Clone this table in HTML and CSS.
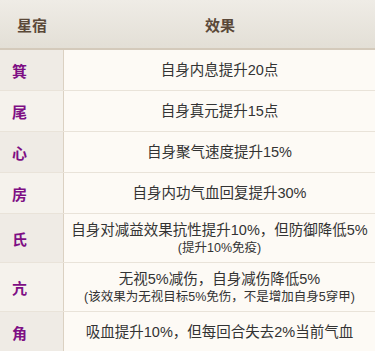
FILE: index.html
```html
<!DOCTYPE html>
<html lang="zh">
<head>
<meta charset="utf-8">
<link rel="stylesheet" href="styles.css">
</head>
<body>
<div class="table">
  <div class="head">
    <div class="hcell name">星宿</div>
    <div class="hcell effect">效果</div>
  </div>
  <div class="row odd">
    <div class="cell name">箕</div>
    <div class="cell effect"><div class="main">自身内息提升20点</div></div>
  </div>
  <div class="row">
    <div class="cell name">尾</div>
    <div class="cell effect"><div class="main">自身真元提升15点</div></div>
  </div>
  <div class="row odd">
    <div class="cell name">心</div>
    <div class="cell effect"><div class="main">自身聚气速度提升15%</div></div>
  </div>
  <div class="row">
    <div class="cell name">房</div>
    <div class="cell effect"><div class="main">自身内功气血回复提升30%</div></div>
  </div>
  <div class="row odd">
    <div class="cell name">氏</div>
    <div class="cell effect"><div class="main">自身对减益效果抗性提升10%，但防御降低5%</div><div class="sub">(提升10%免疫)</div></div>
  </div>
  <div class="row">
    <div class="cell name">亢</div>
    <div class="cell effect"><div class="main">无视5%减伤，自身减伤降低5%</div><div class="sub">(该效果为无视目标5%免伤，不是增加自身5穿甲)</div></div>
  </div>
  <div class="row odd">
    <div class="cell name">角</div>
    <div class="cell effect"><div class="main">吸血提升10%，但每回合失去2%当前气血</div></div>
  </div>
</div>
</body>
</html>
```

FILE: styles.css
```css
html, body {
  margin: 0;
  padding: 0;
  background: #fdfaf5;
}
body {
  font-family: "Liberation Sans", "Noto Sans CJK SC", sans-serif;
  color: #333;
  overflow: hidden;
}
.table {
  width: 375px;
}
.head {
  display: grid;
  grid-template-columns: 64px 1fr;
  height: 48px;
  background: linear-gradient(#efece6, #e3dfd6);
  border-bottom: 2px solid #d4cabb;
}
.hcell {
  display: flex;
  align-items: center;
  font-size: 15px;
  font-weight: bold;
  color: #5a4838;
}
.hcell.name {
  padding-left: 17px;
}
.hcell.effect {
  justify-content: center;
  padding-left: 1px;
}
.row {
  display: grid;
  grid-template-columns: 64px 1fr;
  border-bottom: 1px solid #e9e3d9;
}
.cell {
  min-height: 40px;
  display: flex;
  flex-direction: column;
  justify-content: center;
}
.cell.name {
  border-right: 1px solid #dbd1c2;
  background: #f5f2ec;
  padding-left: 12px;
  font-size: 15px;
  font-weight: bold;
  color: #7e0f84;
}
.row.odd .cell.name {
  background: #efebe5;
}
.cell.effect {
  align-items: center;
  text-align: center;
  padding: 6px 2px;
  box-sizing: border-box;
  background: #fdfaf5;
}
.main {
  font-size: 14.5px;
  line-height: 20px;
}
.sub {
  font-size: 12.5px;
  line-height: 16px;
}
```
